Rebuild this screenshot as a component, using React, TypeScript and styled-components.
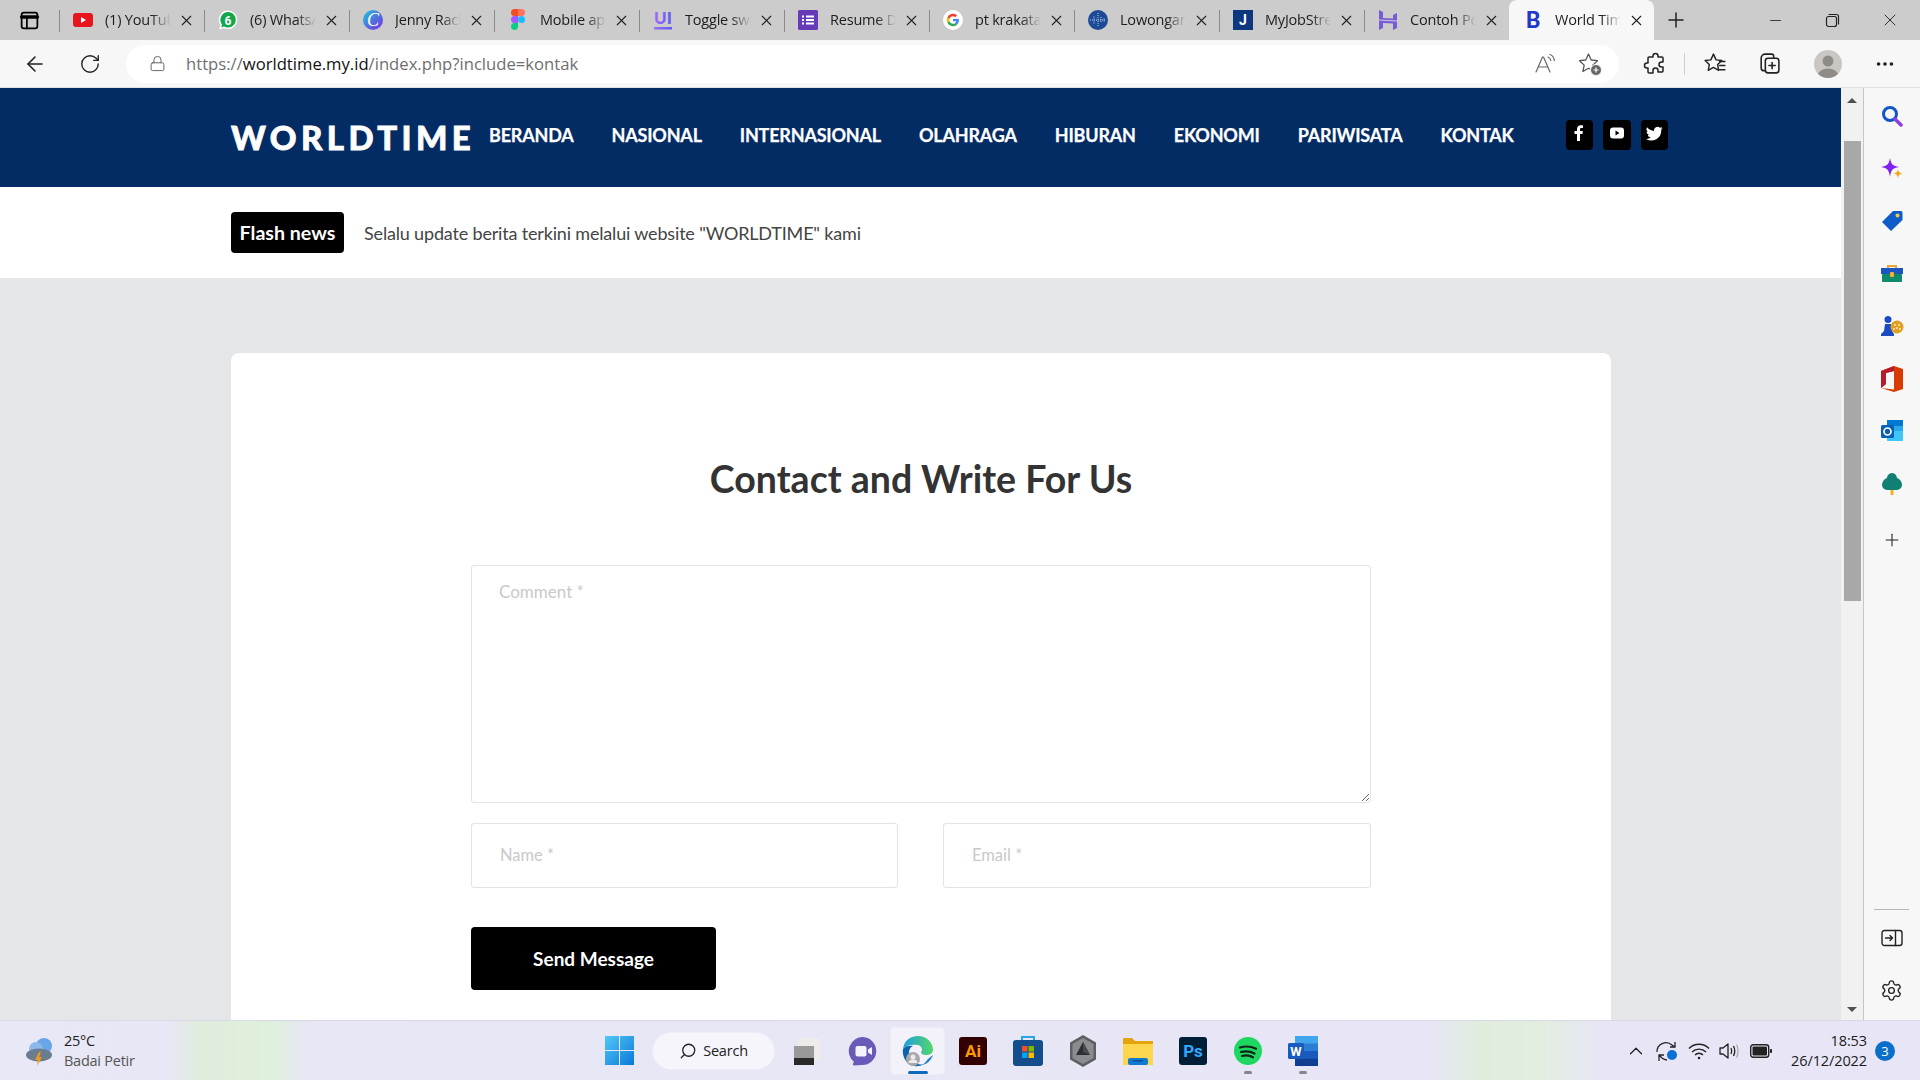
import React from "react";
import styled, { createGlobalStyle } from "styled-components";
import { ArrowLeft, RotateCw, X, Plus, Minus, Lock, Search as SearchIcon, MoreHorizontal, ChevronUp, Settings } from "lucide-react";

const Global = createGlobalStyle`
  html, body { margin: 0; padding: 0; width: 1920px; height: 1080px; overflow: hidden; }
  * { box-sizing: border-box; }
  #root { width: 1920px; height: 1080px; }
`;

const UI_FONT = `"Open Sans", "Noto Sans", sans-serif`;
const WEB_FONT = `Lato, "Noto Sans", sans-serif`;

const Shell = styled.div`
  width: 1920px; height: 1080px; display: flex; flex-direction: column;
  overflow: hidden; background: #f7f7f7; font-family: ${UI_FONT};
`;
const TabStrip = styled.div`
  height: 40px; flex: none; background: #cccccc; display: flex; align-items: stretch; position: relative;
`;
const TabToggle = styled.div`
  width: 59px; flex: none; display: flex; align-items: center; justify-content: center; padding-right: 1px;
`;
const Tab = styled.div<{ $active?: boolean }>`
  width: 145px; flex: none; display: flex; align-items: center; position: relative;
  background: ${p => (p.$active ? "#f7f7f7" : "transparent")};
  border-radius: ${p => (p.$active ? "8px 8px 0 0" : "0")};
  &::before {
    content: ""; position: absolute; left: 0; top: 10px; bottom: 8px; width: 1px;
    background: ${p => (p.$active ? "transparent" : "#8a8a8a")};
  }
`;
const FavSlot = styled.div`
  width: 20px; height: 20px; margin-left: 14px; flex: none; display: flex; align-items: center; justify-content: center;
`;
const TabTitle = styled.div`
  margin: 0 0 2px 12px; width: 66px; flex: none; overflow: hidden; white-space: nowrap;
  font-size: 14.5px; color: #1d1d1d; letter-spacing: -0.2px;
  -webkit-mask-image: linear-gradient(90deg, #000 70%, transparent 100%);
  mask-image: linear-gradient(90deg, #000 70%, transparent 100%);
`;
const TabClose = styled.div`
  margin-left: 5px; width: 20px; height: 20px; display: flex; align-items: center; justify-content: center; color: #222;
`;
const NewTab = styled.div`
  width: 44px; flex: none; display: flex; align-items: center; justify-content: center; color: #222;
`;
const WindowControls = styled.div`
  margin-left: auto; display: flex; align-items: center; padding-right: 1px; color: #222;
`;
const WinButton = styled.div`
  width: 57.5px; display: flex; align-items: center; justify-content: center;
`;
const Toolbar = styled.div`
  height: 48px; flex: none; background: #f7f7f7; display: flex; align-items: center; padding-left: 19px;
  border-bottom: 1px solid #e2e2e2;
`;
const ToolIcon = styled.div<{ $w?: number; $ml?: number }>`
  width: ${p => p.$w ?? 56}px; margin-left: ${p => p.$ml ?? 0}px; flex: none;
  display: flex; align-items: center; justify-content: center; color: #222;
`;
const NavPair = styled.div`
  display: flex; width: 107px; flex: none; gap: 25px; padding-left: 1px;
`;
const AddressBar = styled.div`
  width: 1493px; height: 38px; flex: none; background: #fff; border-radius: 19px;
  display: flex; align-items: center; padding-left: 23px; color: #666;
`;
const Url = styled.div`
  margin-left: 20px; font-size: 16.65px; color: #6f6f6f; white-space: nowrap;
  strong { font-weight: 400; color: #111; }
`;
const AddrEnd = styled.div`
  margin-left: auto; display: flex; align-items: center; gap: 20px; padding-right: 16px;
`;
const ToolSep = styled.div`
  width: 1px; height: 22px; background: #cfcfcf; flex: none; margin: 0 12px;
`;
const Avatar = styled.div`
  width: 28px; height: 28px; border-radius: 50%; background: #c9c6c3; overflow: hidden; flex: none;
`;
const Body = styled.div`
  flex: 1; min-height: 0; display: flex;
`;
const Page = styled.div`
  width: 1841px; flex: none; overflow: hidden; background: #e4e6e8; font-family: ${WEB_FONT};
`;
const Header = styled.header`
  height: 99px; background: #032b64; display: flex; align-items: center; padding-left: 231px;
`;
const Logo = styled.div`
  width: 258px; flex: none; font-size: 33px; line-height: 1; font-weight: 900; color: #fff; letter-spacing: 4.4px; white-space: nowrap;
  -webkit-text-stroke: 0.8px #fff;
`;
const Nav = styled.nav`
  display: flex; gap: 38px; margin-bottom: 6px; align-items: center;
`;
const NavLink = styled.a`
  font-size: 18px; font-weight: 700; color: #fff; white-space: nowrap; letter-spacing: -0.2px;
  -webkit-text-stroke: 0.25px #fff;
`;
const Socials = styled.div`
  display: flex; gap: 10px; margin-left: 52px; margin-bottom: 5px;
`;
const SocialBtn = styled.div`
  width: 27.5px; height: 30px; background: #000; border-radius: 4px; color: #fff;
  display: flex; justify-content: center; padding-top: 5px;
`;
const FlashBar = styled.div`
  height: 91px; background: #fff; display: flex; align-items: center; padding-left: 231px; gap: 20px;
`;
const FlashBadge = styled.div`
  width: 113px; height: 41px; background: #000; color: #fff; border-radius: 4px; font-size: 19.6px; font-weight: 700;
  display: flex; align-items: center; justify-content: center; white-space: nowrap;
`;
const FlashText = styled.div`
  font-size: 18px; color: #444; white-space: nowrap; letter-spacing: -0.17px;
`;
const Main = styled.main`
  padding: 75px 0 0 231px;
`;
const Card = styled.section`
  width: 1380px; background: #fff; border-radius: 8px 8px 0 0; padding: 105px 240px 0; height: 800px;
`;
const Title = styled.h2`
  margin: 0; font-size: 37.5px; line-height: 42px; text-align: center; font-weight: 700; color: #333;
`;
const Form = styled.form`
  margin-top: 65px; display: flex; flex-direction: column;
`;
const TextArea = styled.textarea`
  display: block; width: 900px; height: 238px; border: 1px solid #e3e3e3; border-radius: 3px; padding: 15px 27px;
  font-family: ${WEB_FONT}; font-size: 17px; outline: none; background: #fff;
  &::placeholder { color: #c9c9c9; opacity: 1; }
`;
const FieldRow = styled.div`
  display: flex; justify-content: space-between; margin-top: 20px;
`;
const Field = styled.input<{ $w: number }>`
  width: ${p => p.$w}px; height: 65px; border: 1px solid #e3e3e3; border-radius: 3px; padding: 0 28px 2px;
  font-family: ${WEB_FONT}; font-size: 16.5px; outline: none; background: #fff;
  &::placeholder { color: #c9c9c9; opacity: 1; }
`;
const SendBtn = styled.button`
  margin-top: 39px; width: 245px; height: 63px; background: #000; color: #fff; border: 0; border-radius: 4px;
  font-family: ${WEB_FONT}; font-size: 19px; font-weight: 700;
`;
const Scrollbar = styled.div`
  width: 22px; flex: none; background: #f1f1f1; display: flex; flex-direction: column; align-items: center; padding-top: 10px;
`;
const ScrollArrow = styled.div<{ $down?: boolean }>`
  width: 0; height: 0; border-left: 5px solid transparent; border-right: 5px solid transparent;
  ${p => (p.$down ? "border-top: 5px solid #505050; margin-top: auto; margin-bottom: 8px;" : "border-bottom: 5px solid #505050;")}
`;
const ScrollThumb = styled.div`
  width: 17px; height: 460px; background: #a8a8a8; margin-top: 38px;
`;
const SidePanel = styled.aside`
  width: 57px; flex: none; background: #f7f7f7; border-left: 1px solid #c6c6c6; display: flex; flex-direction: column; align-items: center; padding: 2px 1px 3px 0;
`;
const SideIcon = styled.div`
  height: 52.5px; width: 100%; flex: none; display: flex; align-items: center; justify-content: center; color: #222;
`;
const SideAdd = styled(SideIcon)`
  margin-top: 4px;
`;
const SideRule = styled.div`
  width: 35px; height: 1px; background: #b8b8b8; margin-top: auto; margin-bottom: 1px;
`;
const SideBottom = styled.div`
  height: 53px; width: 100%; flex: none; display: flex; align-items: center; justify-content: center; color: #222;
`;
const Taskbar = styled.footer`
  height: 60px; flex: none; display: flex; align-items: center; border-top: 1px solid #d9d8e8;
  background: linear-gradient(90deg, #e9e8f6 0, #e8e7f5 170px, #dfeddc 200px, #dff0dc 270px, #e7e7f5 310px, #e8e6f6 1430px, #e0eddd 1480px, #e2eedf 1540px, #e8e6f6 1600px, #e8e6f6 100%);
`;
const Weather = styled.div`
  width: 592px; flex: none; display: flex; align-items: center; padding-left: 24px; gap: 8px;
`;
const WeatherText = styled.div`
  display: flex; flex-direction: column; font-size: 14.5px; line-height: 20px; color: #1c1c1c; letter-spacing: -0.25px;
  span + span { color: #555; }
`;
const TaskSlot = styled.div<{ $w?: number; $active?: boolean }>`
  width: ${p => p.$w ?? 55}px; height: 48px; flex: none; display: flex; align-items: center; justify-content: center; position: relative;
  ${p => p.$active ? "background: #f3f2fb; border-radius: 5px; box-shadow: 0 0 0 1px #ecebf6 inset;" : ""}
`;
const Indicator = styled.div<{ $active?: boolean }>`
  position: absolute; bottom: 1px; left: 50%; transform: translateX(-50%);
  width: ${p => (p.$active ? 20 : 8)}px; height: 3px; border-radius: 2px; background: ${p => (p.$active ? "#0f6cbd" : "#85848f")};
`;
const SearchPill = styled.div`
  width: 123px; height: 38px; margin: 0 2px 0 5px; flex: none; border-radius: 19px; background: #f6f5fc;
  display: flex; align-items: center; justify-content: center; gap: 6px; font-size: 14.5px; color: #222; letter-spacing: -0.2px; border: 1px solid #eeedf8;
`;
const MirroredSearch = styled(SearchIcon)`
  transform: scaleX(-1);
`;
const Tray = styled.div`
  margin-left: auto; display: flex; align-items: center; padding-right: 25px; color: #222;
`;
const TrayIcon = styled.div<{ $w?: number }>`
  width: ${p => p.$w ?? 32}px; flex: none; display: flex; align-items: center; justify-content: center;
`;
const Clock = styled.div`
  margin-left: 12px; display: flex; flex-direction: column; align-items: flex-end; font-size: 14.5px; line-height: 20px; color: #1c1c1c; letter-spacing: -0.1px;
`;
const Badge = styled.div`
  width: 20px; height: 20px; border-radius: 50%; background: #0b6fc9; color: #fff; font-size: 13px; margin-left: 8px;
  display: flex; align-items: center; justify-content: center;
`;

const Fav = {
  yt: <svg width="20" height="20" viewBox="0 0 20 20"><rect y="3" width="20" height="14" rx="3" fill="#e8141c" /><path d="M8 7l5 3-5 3z" fill="#fff" /></svg>,
  wa: <svg width="20" height="20" viewBox="0 0 20 20"><path d="M10 0.5a9.3 9.3 0 0 1 0 18.6c-1.6 0-3-.4-4.3-1L1 19.5l1.5-4.4A9.3 9.3 0 0 1 10 .5z" fill="#fff" /><path d="M10 2a7.8 7.8 0 0 1 0 15.6c-1.5 0-2.8-.4-4-1.1l-2.8.8.9-2.7A7.8 7.8 0 0 1 10 2z" fill="#12a84a" /><text x="10" y="14.5" fontSize="12" fontWeight="700" fontFamily="Roboto, sans-serif" fill="#fff" textAnchor="middle">6</text></svg>,
  canva: <svg width="20" height="20" viewBox="0 0 20 20"><defs><linearGradient id="cv" x1="0" y1="0" x2="1" y2="1"><stop offset="0" stopColor="#1cc6d4" /><stop offset="1" stopColor="#7d2ae8" /></linearGradient></defs><circle cx="10" cy="10" r="10" fill="url(#cv)" /><text x="10" y="16" fontSize="18" fontStyle="italic" fontFamily="Liberation Serif, serif" fill="#fff" textAnchor="middle">C</text></svg>,
  figma: <svg width="14" height="22" viewBox="0 0 14 22"><path d="M3.5 0H7v7H3.500a3.500 3.500 0 0 1 0-7z" fill="#f24e1e" /><path d="M7 0h3.500a3.500 3.500 0 0 1 0 7H7z" fill="#ff7262" /><path d="M3.500 7H7v7H3.500a3.500 3.500 0 0 1 0-7z" fill="#a259ff" /><circle cx="10.500" cy="10.500" r="3.500" fill="#1abcfe" /><path d="M3.500 14H7v4a3.500 3.500 0 1 1-3.500-4z" fill="#0acf83" /></svg>,
  ui: <svg width="20" height="22" viewBox="0 0 20 22"><defs><linearGradient id="uig" x1="0" y1="0" x2="1" y2="0"><stop offset="0" stopColor="#a56cf5" /><stop offset="1" stopColor="#5b5cf0" /></linearGradient></defs><text x="10" y="15" fontSize="17" fontWeight="900" fontFamily="Lato, sans-serif" fill="url(#uig)" textAnchor="middle">UI</text><rect x="1" y="18" width="18" height="2.500" fill="url(#uig)" /></svg>,
  forms: <svg width="20" height="20" viewBox="0 0 20 20"><rect width="20" height="20" rx="1.500" fill="#673ab7" /><g fill="#fff"><rect x="4" y="5.500" width="2" height="2" /><rect x="8" y="5.500" width="8" height="2" /><rect x="4" y="9" width="2" height="2" /><rect x="8" y="9" width="8" height="2" /><rect x="4" y="12.500" width="2" height="2" /><rect x="8" y="12.500" width="8" height="2" /></g></svg>,
  google: <svg width="20" height="20" viewBox="0 0 20 20"><circle cx="10" cy="10" r="10" fill="#fff" /><g transform="translate(3.500 3.500) scale(.27)"><path d="M46.100 24.500c0-1.600-.1-3.100-.4-4.500H24v8.500h12.400c-.5 2.900-2.200 5.300-4.600 6.900v5.700h7.400c4.400-4 6.900-9.900 6.900-16.600z" fill="#4285f4" /><path d="M24 47c6.200 0 11.400-2.100 15.200-5.600l-7.400-5.700c-2.100 1.400-4.700 2.200-7.800 2.200-6 0-11.100-4-12.900-9.500H3.500v5.900C7.300 41.800 15 47 24 47z" fill="#34a853" /><path d="M11.100 28.400c-.5-1.400-.7-2.900-.7-4.400s.3-3 .7-4.400v-5.900H3.500C2 16.800 1 20.300 1 24s.9 7.200 2.500 10.300l7.600-5.900z" fill="#fbbc05" /><path d="M24 10.100c3.400 0 6.400 1.200 8.800 3.400l6.600-6.600C35.400 3.200 30.200 1 24 1 15 1 7.300 6.200 3.500 13.700l7.600 5.900c1.800-5.500 6.900-9.500 12.900-9.500z" fill="#ea4335" /></g></svg>,
  low: <svg width="20" height="20" viewBox="0 0 20 20"><circle cx="10" cy="10" r="10" fill="#1c4a96" /><path d="M2 10h16M10 3v14M6 6.500v7M13 7v6M16 8.500v3" stroke="#b8cdf0" strokeWidth="1" strokeDasharray="1 1" /></svg>,
  job: <svg width="20" height="20" viewBox="0 0 20 20"><rect width="20" height="20" fill="#0d3880" /><text x="10" y="15" fontSize="14" fontWeight="700" fontFamily="Roboto, sans-serif" fill="#fff" textAnchor="middle">J</text></svg>,
  host: <svg width="18" height="20" viewBox="0 0 18 20" fill="#7a5bd6"><path d="M0 0l4 2v6l10 .5V5l4-2v7.500L0 9.500zM0 10.500l18 1V18l-4 2v-6.500L4 13v5l-4 2z" /></svg>,
  b: <svg width="20" height="22" viewBox="0 0 20 22"><text x="10" y="18.500" fontSize="22" fontWeight="900" fontFamily="Lato, sans-serif" fill="#2238c9" textAnchor="middle">B</text></svg>,
};

const tabs = [
  { icon: Fav.yt, title: "(1) YouTube" },
  { icon: Fav.wa, title: "(6) WhatsApp" },
  { icon: Fav.canva, title: "Jenny Rachel" },
  { icon: Fav.figma, title: "Mobile app" },
  { icon: Fav.ui, title: "Toggle switch" },
  { icon: Fav.forms, title: "Resume Data" },
  { icon: Fav.google, title: "pt krakatau" },
  { icon: Fav.low, title: "Lowongan" },
  { icon: Fav.job, title: "MyJobStreet" },
  { icon: Fav.host, title: "Contoh Post" },
  { icon: Fav.b, title: "World Time", active: true },
];

const navItems = ["BERANDA", "NASIONAL", "INTERNASIONAL", "OLAHRAGA", "HIBURAN", "EKONOMI", "PARIWISATA", "KONTAK"];

const Stroke = ({ w = 22, h = 22, vb = "0 0 24 24", sw = 1.6, children }: { w?: number; h?: number; vb?: string; sw?: number; children: React.ReactNode }) => (
  <svg width={w} height={h} viewBox={vb} fill="none" stroke="currentColor" strokeWidth={sw} strokeLinecap="round" strokeLinejoin="round">{children}</svg>
);

const sideIcons = [
  <svg key="s" width="22" height="22" viewBox="0 0 22 22"><circle cx="9" cy="9" r="6.500" fill="none" stroke="#1254cc" strokeWidth="3" /><path d="M14 14l6 6" stroke="#8a3fe0" strokeWidth="3.500" strokeLinecap="round" /></svg>,
  <svg key="sp" width="24" height="24" viewBox="0 0 24 24"><path d="M10 1c1 6 2.500 8 9 9-6.500 1-8 3-9 10-1-7-2.500-9-9-10 6.500-1 8-3 9-9z" fill="#7d22f0" /><path d="M18 12c.5 3 1.200 3.800 5 4.500-3.800.7-4.500 1.500-5 5-.5-3.500-1.200-4.300-5-5 3.800-.7 4.500-1.500 5-4.500z" fill="#f5a81c" /></svg>,
  <svg key="t" width="22" height="22" viewBox="0 0 22 22"><path d="M12 1h8a1.500 1.500 0 0 1 1.500 1.500V10L10 21 1 12z" fill="#0d5cc8" /><circle cx="16.500" cy="5.500" r="2" fill="#f8c83a" /></svg>,
  <svg key="b" width="22" height="20" viewBox="0 0 22 20"><path d="M7 5V2h8v3" fill="none" stroke="#e5a83a" strokeWidth="2" /><rect y="4" width="22" height="6" fill="#1a55c0" /><rect x="1" y="10" width="20" height="8" rx="1" fill="#0f8a6c" /><rect x="9" y="8" width="4" height="5" rx="1" fill="#f3b028" /></svg>,
  <svg key="c" width="24" height="22" viewBox="0 0 24 22"><circle cx="8" cy="4.500" r="3.500" fill="#1b4bc4" /><path d="M5 9h6l1 7 2 3v2H1v-2l3-3z" fill="#1b4bc4" /><circle cx="17" cy="12" r="6.500" fill="#e0a022" /><circle cx="15" cy="10" r="1" fill="#fbe9b8" /><circle cx="19" cy="10" r="1" fill="#fbe9b8" /><circle cx="17" cy="13" r="1" fill="#fbe9b8" /><circle cx="14" cy="14" r="1" fill="#fbe9b8" /><circle cx="20" cy="14" r="1" fill="#fbe9b8" /></svg>,
  <svg key="o" width="22" height="26" viewBox="0 0 22 26"><path d="M13 0l9 3v20l-9 3-13-4 13 1.500V5L5 7v11l-5 4V5z" fill="#d83b01" /><path d="M0 5l13-5v5L5 7v11l-5 4z" fill="#b81c2c" /></svg>,
  <svg key="ou" width="22" height="22" viewBox="0 0 22 22"><rect x="6" y="0" width="16" height="21" rx="1" fill="#28a8ea" /><rect x="6" y="0" width="16" height="6" fill="#0078d4" /><path d="M6 11h16v10H6z" fill="#50d9ff" opacity=".6" /><rect y="5" width="13" height="13" rx="1.500" fill="#0a5fb5" /><circle cx="6.500" cy="11.500" r="3.500" fill="none" stroke="#fff" strokeWidth="1.700" /></svg>,
  <svg key="tr" width="20" height="22" viewBox="0 0 20 22"><rect x="8.500" y="15" width="3" height="7" fill="#f0b02c" /><path d="M10 0c3 0 5 3 5 5 3 1 5 4 5 7s-3 5-6 5H6c-3 0-6-2-6-5s2-6 5-7c0-2 2-5 5-5z" fill="#0f8073" /></svg>,
];

export default function App() {
  return (
    <Shell>
      <Global />
      <TabStrip>
        <TabToggle>
          <Stroke w={21} h={21} sw={2}><rect x="3" y="3" width="18" height="18" rx="2.500" /><path d="M3 8h18" strokeWidth="4" /><path d="M9 8v13" /></Stroke>
        </TabToggle>
        {tabs.map(t => (
          <Tab key={t.title} $active={t.active}>
            <FavSlot>{t.icon}</FavSlot>
            <TabTitle>{t.title}</TabTitle>
            <TabClose><X size={17} strokeWidth={1.6} /></TabClose>
          </Tab>
        ))}
        <NewTab><Plus size={24} strokeWidth={1.5} /></NewTab>
        <WindowControls>
          <WinButton><Minus size={17} strokeWidth={1.2} /></WinButton>
          <WinButton>
            <Stroke w={15} h={15} vb="0 0 15 15" sw={1.2}><rect x="1.500" y="3.500" width="10" height="10" rx="2" /><path d="M4 1.500h7.500a2 2 0 0 1 2 2V11" /></Stroke>
          </WinButton>
          <WinButton><X size={20} strokeWidth={1.1} /></WinButton>
        </WindowControls>
      </TabStrip>
      <Toolbar>
        <NavPair>
          <ToolIcon $w={30}><ArrowLeft size={24} strokeWidth={1.6} /></ToolIcon>
          <ToolIcon $w={30}><RotateCw size={22} strokeWidth={1.5} /></ToolIcon>
        </NavPair>
        <AddressBar>
          <Lock size={17} strokeWidth={1.4} />
          <Url>https://<strong>worldtime.my.id</strong>/index.php?include=kontak</Url>
          <AddrEnd>
            <Stroke w={24} h={24} sw={1.2}>
              <path d="M3 20L9.500 5h1L17 20M5.500 15h9" /><path d="M15 5c1.500.5 2.500 1.700 2.800 3.500M17 2.500c2.500 1 4 3 4.300 6" />
            </Stroke>
            <svg width="26" height="26" viewBox="0 0 26 26" fill="none" stroke="#555" strokeWidth="1.300" strokeLinejoin="round"><path d="M11.500 3l2.700 6 6.300.7-4.700 4.400 1.300 6.400-5.600-3.200-5.600 3.200 1.300-6.400-4.700-4.400 6.300-.7z" /><circle cx="19" cy="19" r="5.500" fill="#666" stroke="#f7f7f7" strokeWidth="1" /><path d="M19 16.500v5M16.500 19h5" stroke="#fff" strokeWidth="1.200" /></svg>
          </AddrEnd>
        </AddressBar>
        <ToolIcon $w={35} $ml={18}>
          <Stroke w={24} h={24} sw={1.5}><path d="M10 4a2.500 2.500 0 0 1 5 0v1h4a1 1 0 0 1 1 1v4h-1.500a2.500 2.500 0 0 0 0 5H20v4a1 1 0 0 1-1 1h-4v-1.500a2.500 2.500 0 0 0-5 0V21H6a1 1 0 0 1-1-1v-4H4a2.500 2.500 0 0 1 0-5h1V6a1 1 0 0 1 1-1h4z" /></Stroke>
        </ToolIcon>
        <ToolSep />
        <ToolIcon $w={30} $ml={2}>
          <Stroke w={25} h={25} sw={1.4}><path d="M11 3l2.500 5.500 5.500.7-4 3.800 1 5.500-5-2.700-5 2.700 1-5.500-4-3.800 5.500-.7z" /><path d="M17 10h5M17 14h5M17 18h5" /></Stroke>
        </ToolIcon>
        <ToolIcon $w={30} $ml={25}>
          <Stroke w={25} h={25} sw={1.5}><rect x="8" y="7" width="13" height="14" rx="2.500" /><path d="M8 19H7a3 3 0 0 1-3-3V7a4 4 0 0 1 4-4h6a2 2 0 0 1 2 2v2" /><path d="M14.500 11v6M11.500 14h6" /></Stroke>
        </ToolIcon>
        <ToolIcon $w={30} $ml={29}>
          <Avatar>
            <svg width="28" height="28" viewBox="0 0 28 28"><circle cx="14" cy="11" r="5.500" fill="#8f8c88" /><ellipse cx="14" cy="25" rx="10" ry="6.500" fill="#8f8c88" /></svg>
          </Avatar>
        </ToolIcon>
        <ToolIcon $w={30} $ml={27}><MoreHorizontal size={22} strokeWidth={2} /></ToolIcon>
      </Toolbar>
      <Body>
        <Page>
          <Header>
            <Logo>WORLDTIME</Logo>
            <Nav>{navItems.map(n => <NavLink key={n}>{n}</NavLink>)}</Nav>
            <Socials>
              <SocialBtn>
                <svg width="12" height="16" viewBox="0 0 12 16" fill="#fff"><path d="M4 16V9H1.500V6H4V4c0-2.500 1.500-3.800 3.600-3.800.9 0 1.900.1 2.400.2v2.700H8.500C7.300 3.100 7 3.700 7 4.500V6h2.900L9.500 9H7v7z" /></svg>
              </SocialBtn>
              <SocialBtn>
                <svg width="16" height="16" viewBox="0 0 16 16"><rect x="1" y="2.500" width="14" height="11" rx="3" fill="#fff" /><path d="M6.500 5.500l4 2.500-4 2.500z" fill="#000" /></svg>
              </SocialBtn>
              <SocialBtn>
                <svg width="17" height="17" viewBox="0 0 24 24" fill="#fff"><path d="M23.500 4.700c-.9.400-1.800.6-2.800.8 1-.6 1.800-1.500 2.100-2.700-.9.600-2 1-3.100 1.200a4.900 4.900 0 0 0-8.300 4.400C7.400 8.200 3.900 6.300 1.500 3.300a4.900 4.900 0 0 0 1.500 6.500c-.8 0-1.500-.2-2.200-.6v.1c0 2.400 1.700 4.300 3.900 4.800-.7.200-1.500.2-2.200.1.600 1.900 2.400 3.300 4.500 3.400A9.800 9.800 0 0 1 0 19.600 13.900 13.900 0 0 0 21.500 7.200v-.6c.8-.6 1.500-1.300 2-1.900z" /></svg>
              </SocialBtn>
            </Socials>
          </Header>
          <FlashBar>
            <FlashBadge>Flash news</FlashBadge>
            <FlashText>Selalu update berita terkini melalui website "WORLDTIME" kami</FlashText>
          </FlashBar>
          <Main>
            <Card>
              <Title>Contact and Write For Us</Title>
              <Form>
                <TextArea placeholder="Comment *" />
                <FieldRow>
                  <Field $w={427} placeholder="Name *" />
                  <Field $w={428} placeholder="Email *" />
                </FieldRow>
                <SendBtn type="button">Send Message</SendBtn>
              </Form>
            </Card>
          </Main>
        </Page>
        <Scrollbar>
          <ScrollArrow />
          <ScrollThumb />
          <ScrollArrow $down />
        </Scrollbar>
        <SidePanel>
          {sideIcons.map((ic, i) => <SideIcon key={i}>{ic}</SideIcon>)}
          <SideAdd><Plus size={20} strokeWidth={1.3} /></SideAdd>
          <SideRule />
          <SideBottom>
            <Stroke w={22} h={18} vb="0 0 22 18" sw={1.4}><rect x="1" y="1.500" width="20" height="15" rx="2.500" /><path d="M14.500 1.500v15M4.500 9h7M9 6.500L11.500 9 9 11.500" /></Stroke>
          </SideBottom>
          <SideBottom><Settings size={23} strokeWidth={1.4} /></SideBottom>
        </SidePanel>
      </Body>
      <Taskbar>
        <Weather>
          <svg width="32" height="32" viewBox="0 0 32 32"><circle cx="20" cy="11" r="8" fill="#6aa5e8" /><circle cx="12" cy="14" r="7" fill="#8db8ea" /><ellipse cx="15" cy="20" rx="13" ry="6.500" fill="#6b7b90" /><path d="M15 17l-4 8h3l-1 6 5-9h-3l2-5z" fill="#f29a1e" /></svg>
          <WeatherText><span>25°C</span><span>Badai Petir</span></WeatherText>
        </Weather>
        <TaskSlot>
          <svg width="29" height="29" viewBox="0 0 29 29"><defs><linearGradient id="w1" x1="0" y1="0" x2="1" y2="1"><stop offset="0" stopColor="#52c8f7" /><stop offset="1" stopColor="#0a78d8" /></linearGradient></defs><path d="M0 0h14v14H0zM15 0h14v14H15zM0 15h14v14H0zM15 15h14v14H15z" fill="url(#w1)" /></svg>
        </TaskSlot>
        <SearchPill>
          <MirroredSearch size={18} strokeWidth={1.7} />
          Search
        </SearchPill>
        <TaskSlot $w={58}>
          <svg width="32" height="30" viewBox="0 0 32 30"><rect x="8" y="2" width="22" height="21" fill="#eeeceb" /><rect x="4" y="10" width="20" height="13" fill="#9a9a9a" /><rect x="4" y="22" width="20" height="7" fill="#2a2a2a" /></svg>
        </TaskSlot>
        <TaskSlot>
          <svg width="30" height="30" viewBox="0 0 30 30"><path d="M15 1a14 14 0 1 1-1.500 28L6 29.500c-.9 0-1.300-.7-1-1.400l.9-2.300A14 14 0 0 1 15 1z" fill="#6a5ab8" /><rect x="7.500" y="10" width="11" height="10.500" rx="2" fill="#f4f2fb" /><path d="M20 13.500l4-2.500v8l-4-2.500z" fill="#f4f2fb" /></svg>
        </TaskSlot>
        <TaskSlot $active>
          <svg width="32" height="32" viewBox="0 0 32 32"><defs><linearGradient id="e1" x1="0" y1="0" x2="1" y2="0"><stop offset="0" stopColor="#1f9ce0" /><stop offset="1" stopColor="#52d868" /></linearGradient></defs><path d="M1 14C2 6 8 1 16 1c8 0 15 6 15 14 0 3-3 5-7 5-3 0-5-1-5-3 2-2 1-6-3-7-6-1-12 0-15 4z" fill="url(#e1)" /><path d="M1 14c2-3 7-4 10-3-4 2-5 6-3 11 2 5 8 9 14 7-5 3-11 3-15 0C3 26 0 20 1 14z" fill="#0c62b0" /><path d="M31 20c-2 6-7 10-12 10 4-1 5-4 7-6z" fill="#1f80d0" /><circle cx="11" cy="24" r="7" fill="#a9a8a8" /><circle cx="11" cy="22" r="2.500" fill="#ececec" /><path d="M6.500 28c.5-3 2.500-3.500 4.500-3.500s4 .5 4.500 3.500z" fill="#ececec" /></svg>
          <Indicator $active />
        </TaskSlot>
        <TaskSlot>
          <svg width="28" height="28" viewBox="0 0 28 28"><rect width="28" height="28" rx="3" fill="#330000" /><text x="14" y="20" fontSize="17" fontWeight="700" fontFamily="Roboto, sans-serif" fill="#ff9a00" textAnchor="middle">Ai</text></svg>
        </TaskSlot>
        <TaskSlot>
          <svg width="30" height="32" viewBox="0 0 30 32"><path d="M9 6V2h12v4" fill="none" stroke="#24a6e8" strokeWidth="2" /><rect y="5" width="30" height="26" rx="3" fill="#134d8c" /><rect x="9" y="11" width="5.500" height="5.500" fill="#f25022" /><rect x="15.500" y="11" width="5.500" height="5.500" fill="#7fba00" /><rect x="9" y="17.500" width="5.500" height="5.500" fill="#00a4ef" /><rect x="15.500" y="17.500" width="5.500" height="5.500" fill="#ffb900" /></svg>
        </TaskSlot>
        <TaskSlot>
          <svg width="28" height="32" viewBox="0 0 28 32"><path d="M14 0l13 7.500v17L14 32 1 24.500v-17z" fill="#5d5f63" /><path d="M14 3l10.500 6v14L14 29 3.500 23V9z" fill="#8a8c90" /><path d="M14 7l7 13H7z" fill="#2d2e31" /><path d="M14 7l7 13-7-3z" fill="#474a4e" /></svg>
        </TaskSlot>
        <TaskSlot>
          <svg width="30" height="30" viewBox="0 0 30 30"><path d="M0 3a1 1 0 0 1 1-1h8l3 3h18v23a1 1 0 0 1-1 1H1a1 1 0 0 1-1-1z" fill="#e3a50a" /><path d="M0 8h30v20a1 1 0 0 1-1 1H1a1 1 0 0 1-1-1z" fill="#fcd64f" /><rect x="5" y="22" width="20" height="7" rx="2" fill="#0f7ad0" /><rect x="10" y="24" width="10" height="1.500" fill="#0b4f96" /></svg>
        </TaskSlot>
        <TaskSlot>
          <svg width="28" height="28" viewBox="0 0 28 28"><rect width="28" height="28" rx="3" fill="#001e36" /><text x="14" y="20" fontSize="17" fontWeight="700" fontFamily="Roboto, sans-serif" fill="#31a8ff" textAnchor="middle">Ps</text></svg>
        </TaskSlot>
        <TaskSlot>
          <svg width="28" height="28" viewBox="0 0 28 28"><circle cx="14" cy="14" r="14" fill="#1ed760" /><path d="M6 10.500c5-1.500 11-1.200 16 1.300M7 15c4.500-1.200 9.500-.8 13.500 1.500M8 19c3.800-1 7.800-.6 11 1.300" fill="none" stroke="#14231a" strokeWidth="2.200" strokeLinecap="round" /></svg>
          <Indicator />
        </TaskSlot>
        <TaskSlot>
          <svg width="30" height="30" viewBox="0 0 30 30"><rect x="7" y="0" width="23" height="30" rx="1.500" fill="#2b7cd3" /><rect x="7" y="0" width="23" height="7.500" fill="#41a5ee" /><rect x="7" y="15" width="23" height="7.500" fill="#185abd" /><rect x="7" y="22.500" width="23" height="7.500" fill="#103f91" /><rect y="7" width="16" height="16" rx="1.500" fill="#185abd" /><text x="8" y="20" fontSize="13" fontWeight="700" fontFamily="Roboto, sans-serif" fill="#fff" textAnchor="middle">W</text></svg>
          <Indicator />
        </TaskSlot>
        <Tray>
          <TrayIcon><ChevronUp size={22} strokeWidth={1.4} /></TrayIcon>
          <TrayIcon $w={29}>
            <svg width="24" height="24" viewBox="0 0 24 24" fill="none" stroke="#222" strokeWidth="1.300"><path d="M2 13a9 9 0 0 1 15-7l3 2M20 3v5h-5M4 16l3 3a9 9 0 0 0 5 2M4 22v-6h5" /><circle cx="17" cy="16" r="5" fill="#0b6fd6" stroke="none" /></svg>
          </TrayIcon>
          <TrayIcon $w={35}>
            <svg width="22" height="18" viewBox="0 0 22 18" fill="none" stroke="#222" strokeWidth="1.400"><path d="M1 6.500a14 14 0 0 1 20 0M4 10a10 10 0 0 1 14 0M7 13a5.500 5.500 0 0 1 8 0" /><circle cx="11" cy="16" r="1.300" fill="#222" stroke="none" /></svg>
          </TrayIcon>
          <TrayIcon $w={26}>
            <svg width="22" height="20" viewBox="0 0 22 20" fill="none" stroke="#222" strokeWidth="1.300"><path d="M2 7v6h3l5 4V3L5 7z" strokeLinejoin="round" /><path d="M13 7c1 2 1 4 0 6M15.500 5c1.500 3 1.500 7 0 10" /><path d="M18.500 3.500c2 3.500 2 9.500 0 13" stroke="#aaa" /></svg>
          </TrayIcon>
          <TrayIcon $w={37}>
            <svg width="22" height="14" viewBox="0 0 22 14"><rect x=".7" y=".7" width="18" height="12.600" rx="2.500" fill="none" stroke="#222" strokeWidth="1.400" /><rect x="2.500" y="2.500" width="14.500" height="9" rx="1" fill="#222" /><rect x="20" y="5" width="2" height="4" rx=".8" fill="#222" /></svg>
          </TrayIcon>
          <Clock><span>18:53</span><span>26/12/2022</span></Clock>
          <Badge>3</Badge>
        </Tray>
      </Taskbar>
    </Shell>
  );
}
